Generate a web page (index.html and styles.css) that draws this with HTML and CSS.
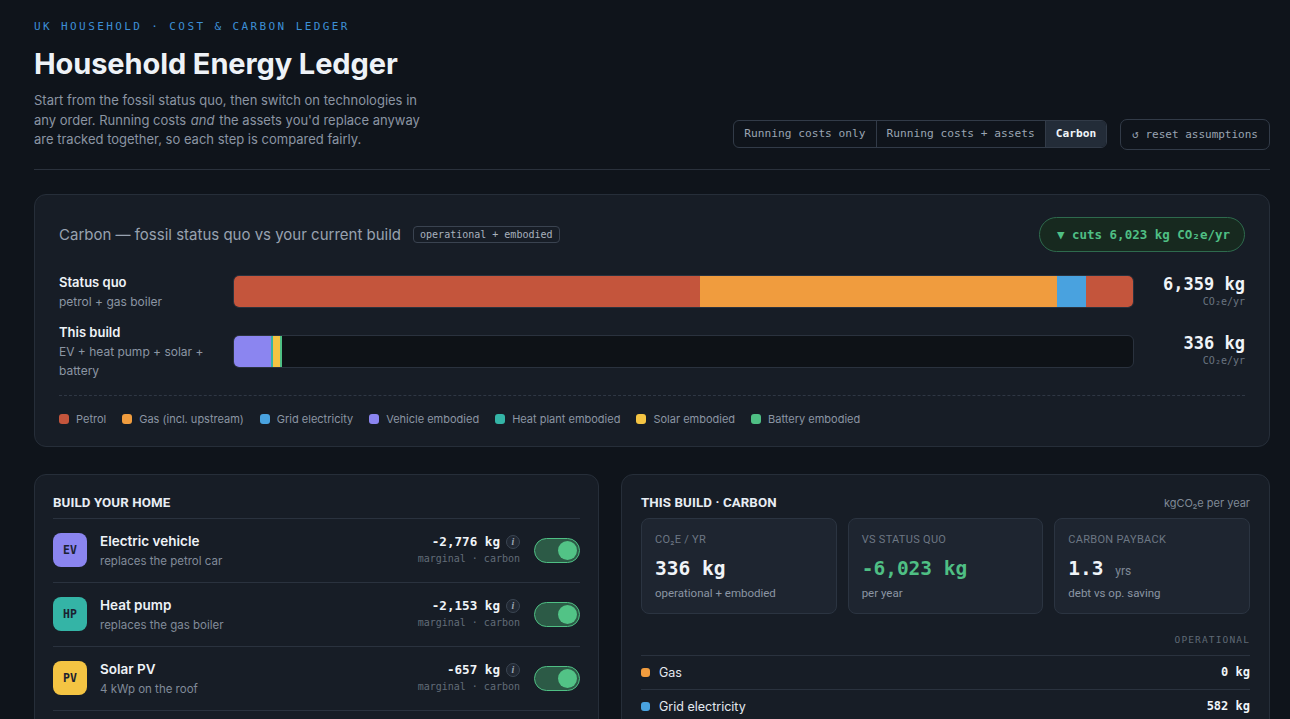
FILE: index.html
```html
<!DOCTYPE html>
<html lang="en">
<head>
<meta charset="utf-8">
<title>Household Energy Ledger</title>
<link rel="stylesheet" href="styles.css">
</head>
<body>
<div class="page">
  <header class="header">
    <div class="intro">
      <div class="eyebrow">UK HOUSEHOLD · COST &amp; CARBON LEDGER</div>
      <h1 class="title">Household Energy Ledger</h1>
      <p class="lede">Start from the fossil status quo, then switch on technologies in any order. Running costs <em>and</em> the assets you'd replace anyway are tracked together, so each step is compared fairly.</p>
    </div>
    <div class="controls">
      <div class="segmented">
        <button class="seg">Running costs only</button>
        <button class="seg">Running costs + assets</button>
        <button class="seg seg-active">Carbon</button>
      </div>
      <button class="reset">↺ reset assumptions</button>
    </div>
  </header>

  <section class="card compare">
    <div class="compare-head">
      <div class="compare-title">
        <span>Carbon — fossil status quo vs your current build</span>
        <span class="tag">operational + embodied</span>
      </div>
      <div class="cut-pill">▼ cuts 6,023 kg CO₂e/yr</div>
    </div>

    <div class="bar-row">
      <div class="bar-label">
        <div class="bar-name">Status quo</div>
        <div class="bar-sub">petrol + gas boiler</div>
      </div>
      <div class="bar-track">
        <div class="seg-fill c-petrol" style="width:51.8%"></div>
        <div class="seg-fill c-gas" style="width:39.75%"></div>
        <div class="seg-fill c-grid" style="width:3.2%"></div>
        <div class="seg-fill c-petrol" style="width:5.25%"></div>
      </div>
      <div class="bar-value">
        <div class="val">6,359 kg</div>
        <div class="unit">CO₂e/yr</div>
      </div>
    </div>

    <div class="bar-row">
      <div class="bar-label">
        <div class="bar-name">This build</div>
        <div class="bar-sub">EV + heat pump + solar + battery</div>
      </div>
      <div class="bar-track">
        <div class="seg-fill c-vehicle" style="width:4.1%"></div>
        <div class="seg-fill c-heat" style="width:0.25%"></div>
        <div class="seg-fill c-solar" style="width:0.75%"></div>
        <div class="seg-fill c-battery" style="width:0.25%"></div>
      </div>
      <div class="bar-value">
        <div class="val">336 kg</div>
        <div class="unit">CO₂e/yr</div>
      </div>
    </div>

    <div class="legend">
      <span class="lg"><i class="sw c-petrol"></i>Petrol</span>
      <span class="lg"><i class="sw c-gas"></i>Gas (incl. upstream)</span>
      <span class="lg"><i class="sw c-grid"></i>Grid electricity</span>
      <span class="lg"><i class="sw c-vehicle"></i>Vehicle embodied</span>
      <span class="lg"><i class="sw c-heat"></i>Heat plant embodied</span>
      <span class="lg"><i class="sw c-solar"></i>Solar embodied</span>
      <span class="lg"><i class="sw c-battery"></i>Battery embodied</span>
    </div>
  </section>

  <div class="lower">
    <section class="card build">
      <h2 class="section-title">BUILD YOUR HOME</h2>
      <div class="tech">
        <div class="badge c-vehicle">EV</div>
        <div class="tech-text">
          <div class="tech-name">Electric vehicle</div>
          <div class="tech-sub">replaces the petrol car</div>
        </div>
        <div class="tech-delta">
          <div class="delta-top"><span class="delta">-2,776 kg</span><span class="info">i</span></div>
          <div class="delta-sub">marginal · carbon</div>
        </div>
        <div class="toggle on"><span class="knob"></span></div>
      </div>
      <div class="tech">
        <div class="badge c-heat">HP</div>
        <div class="tech-text">
          <div class="tech-name">Heat pump</div>
          <div class="tech-sub">replaces the gas boiler</div>
        </div>
        <div class="tech-delta">
          <div class="delta-top"><span class="delta">-2,153 kg</span><span class="info">i</span></div>
          <div class="delta-sub">marginal · carbon</div>
        </div>
        <div class="toggle on"><span class="knob"></span></div>
      </div>
      <div class="tech">
        <div class="badge c-solar">PV</div>
        <div class="tech-text">
          <div class="tech-name">Solar PV</div>
          <div class="tech-sub">4 kWp on the roof</div>
        </div>
        <div class="tech-delta">
          <div class="delta-top"><span class="delta">-657 kg</span><span class="info">i</span></div>
          <div class="delta-sub">marginal · carbon</div>
        </div>
        <div class="toggle on"><span class="knob"></span></div>
      </div>
    </section>

    <section class="card summary">
      <div class="summary-head">
        <h2 class="section-title">THIS BUILD · CARBON</h2>
        <span class="per-year">kgCO₂e per year</span>
      </div>
      <div class="stats">
        <div class="stat">
          <div class="stat-label">CO₂E / YR</div>
          <div class="stat-value">336 kg</div>
          <div class="stat-sub">operational + embodied</div>
        </div>
        <div class="stat">
          <div class="stat-label">VS STATUS QUO</div>
          <div class="stat-value good">-6,023 kg</div>
          <div class="stat-sub">per year</div>
        </div>
        <div class="stat">
          <div class="stat-label">CARBON PAYBACK</div>
          <div class="stat-value">1.3 <span class="stat-unit">yrs</span></div>
          <div class="stat-sub">debt vs op. saving</div>
        </div>
      </div>
      <div class="group-label">OPERATIONAL</div>
      <div class="line-row">
        <span class="line-name"><i class="dot c-gas"></i>Gas</span>
        <span class="line-val">0 kg</span>
      </div>
      <div class="line-row">
        <span class="line-name"><i class="dot c-grid"></i>Grid electricity</span>
        <span class="line-val">582 kg</span>
      </div>
    </section>
  </div>
</div>
</body>
</html>
```

FILE: styles.css
```css
* { box-sizing: border-box; }

html, body {
  margin: 0;
  background: #0f141b;
  color: #e8edf4;
  font-family: "Inter", "Noto Sans", sans-serif;
}

.page {
  width: 1236px;
  margin-left: 34px;
}

/* header */
.header {
  display: flex;
  justify-content: space-between;
  align-items: flex-end;
  padding-top: 20px;
  padding-bottom: 19px;
  border-bottom: 1px solid #2a313c;
}

.eyebrow {
  font-family: "DejaVu Sans Mono", "Liberation Mono", monospace;
  font-size: 11px;
  letter-spacing: 2.4px;
  color: #3d8fd6;
  line-height: 14px;
}

.title {
  margin: 12px 0 0;
  font-family: "Inter", sans-serif;
  font-weight: 700;
  font-size: 29px;
  letter-spacing: -0.1px;
  line-height: 36px;
  color: #eef2f7;
}

.lede {
  margin: 9px 0 0;
  width: 392px;
  font-size: 13px;
  line-height: 19.5px;
  color: #8b95a3;
}
.lede em { font-style: italic; margin: 0 1px; }

.controls {
  display: flex;
  align-items: center;
  gap: 13px;
}

.segmented {
  display: flex;
  border: 1px solid #323b48;
  border-radius: 6px;
  overflow: hidden;
  margin-bottom: 1px;
}

.seg {
  background: transparent;
  border: none;
  border-left: 1px solid #323b48;
  color: #9aa4b2;
  font-family: "DejaVu Sans Mono", "Liberation Mono", monospace;
  font-size: 11.2px;
  height: 26px;
  padding: 0 10px;
}
.seg:first-child { border-left: none; }
.seg-active {
  background: #232c38;
  color: #f0f4f8;
  font-weight: 700;
}

.reset {
  background: transparent;
  border: 1px solid #323b48;
  border-radius: 7px;
  color: #9aa4b2;
  font-family: "DejaVu Sans Mono", "Liberation Mono", monospace;
  font-size: 11px;
  height: 31px;
  padding: 0 11px;
}

/* cards */
.card {
  background: #171d26;
  border: 1px solid #262e39;
  border-radius: 12px;
}

.compare {
  margin-top: 24px;
  padding: 22px 24px 19px;
}

.compare-head {
  display: flex;
  justify-content: space-between;
  align-items: center;
  margin-bottom: 21px;
}

.compare-title {
  display: flex;
  align-items: center;
  gap: 12px;
  font-size: 15px;
  color: #98a2b0;
}

.tag {
  font-family: "DejaVu Sans Mono", "Liberation Mono", monospace;
  font-size: 10px;
  color: #a9b2be;
  border: 1px solid #3a4350;
  border-radius: 4px;
  padding: 2px 6px;
}

.cut-pill {
  font-family: "DejaVu Sans Mono", "Liberation Mono", monospace;
  font-size: 12.5px;
  font-weight: 700;
  color: #4fbf84;
  background: #17291f;
  border: 1px solid #2e6a4d;
  border-radius: 18px;
  height: 35px;
  line-height: 33px;
  padding: 0 14px 0 17px;
}

.bar-row {
  display: grid;
  grid-template-columns: 160px 1fr 97px;
  column-gap: 14px;
  align-items: center;
  margin-bottom: 12px;
}

.bar-name {
  font-size: 13px;
  font-weight: 600;
  color: #eef2f7;
  line-height: 19px;
}
.bar-sub {
  font-size: 12px;
  color: #8b95a3;
  line-height: 19px;
}

.bar-track {
  display: flex;
  height: 33px;
  background: #0e1217;
  border: 1px solid #2a323e;
  border-radius: 6px;
  overflow: hidden;
}

.seg-fill { height: 100%; }

.bar-value { text-align: right; }
.val {
  font-family: "DejaVu Sans Mono", "Liberation Mono", monospace;
  font-weight: 700;
  font-size: 17px;
  color: #f0f4f8;
  line-height: 20px;
}
.unit {
  font-family: "DejaVu Sans Mono", "Liberation Mono", monospace;
  font-size: 10px;
  color: #6a7480;
  line-height: 16px;
}

.c-petrol { background: #c4553c; }
.c-gas { background: #f09c3e; }
.c-grid { background: #49a2df; }
.c-vehicle { background: #8b85f0; }
.c-heat { background: #34b4a6; }
.c-solar { background: #f4c443; }
.c-battery { background: #4fbf84; }

.legend {
  display: flex;
  gap: 16px;
  border-top: 1px dashed #2f3744;
  padding-top: 15px;
  margin-top: 15px;
}
.lg {
  display: flex;
  align-items: center;
  gap: 7px;
  font-size: 11px;
  color: #8b95a3;
  line-height: 16px;
}
.sw {
  width: 10px;
  height: 10px;
  border-radius: 3px;
  display: inline-block;
}

/* lower */
.lower {
  display: grid;
  grid-template-columns: 565px 1fr;
  column-gap: 22px;
  margin-top: 27px;
}

.section-title {
  margin: 0;
  font-family: "Roboto", "Inter", sans-serif;
  font-weight: 700;
  font-size: 13.3px;
  line-height: 16px;
  color: #e8edf4;
  letter-spacing: 0.1px;
}

.build {
  padding: 20px 18px 24px;
}
.build .section-title {
  padding-bottom: 7px;
  border-bottom: 1px solid #2a323e;
}

.tech {
  display: flex;
  align-items: center;
  height: 64px;
  border-bottom: 1px solid #2a323e;
}

.badge {
  width: 34px;
  height: 34px;
  border-radius: 8px;
  display: flex;
  align-items: center;
  justify-content: center;
  font-family: "DejaVu Sans Mono", "Liberation Mono", monospace;
  font-weight: 700;
  font-size: 11.5px;
  color: #1b2130;
  flex: none;
}

.tech-text {
  margin-left: 13px;
  flex: 1;
  padding-top: 2px;
}
.tech-name {
  font-size: 13.5px;
  font-weight: 600;
  color: #eef2f7;
  line-height: 19px;
}
.tech-sub {
  font-size: 11.5px;
  color: #818b99;
  line-height: 20px;
}

.tech-delta { text-align: right; }
.delta-top {
  display: flex;
  align-items: center;
  justify-content: flex-end;
  gap: 6px;
}
.delta {
  font-family: "DejaVu Sans Mono", "Liberation Mono", monospace;
  font-weight: 700;
  font-size: 12.6px;
  color: #f0f4f8;
  line-height: 18px;
}
.info {
  width: 14px;
  height: 14px;
  border-radius: 50%;
  border: 1px solid #3b4552;
  background: #212833;
  color: #9aa4b2;
  font-family: "Liberation Serif", serif;
  font-style: italic;
  font-weight: 700;
  font-size: 10px;
  line-height: 12px;
  text-align: center;
}
.delta-sub {
  font-family: "DejaVu Sans Mono", "Liberation Mono", monospace;
  font-size: 10px;
  color: #626c78;
  line-height: 16px;
}

.toggle {
  width: 46px;
  height: 25px;
  margin-left: 14px;
  border-radius: 13px;
  background: #2c5a46;
  border: 1px solid #4fbf84;
  position: relative;
  flex: none;
}
.knob {
  position: absolute;
  top: 2px;
  right: 2px;
  width: 19px;
  height: 19px;
  border-radius: 50%;
  background: #52c386;
}

.summary {
  padding: 20px 19px 24px;
}
.summary-head {
  display: flex;
  justify-content: space-between;
  align-items: baseline;
  margin-bottom: 7px;
}
.per-year {
  font-size: 11px;
  color: #7f8996;
}

.stats {
  display: grid;
  grid-template-columns: repeat(3, 1fr);
  gap: 11px;
}
.stat {
  background: #1e2530;
  border: 1px solid #2b3441;
  border-radius: 8px;
  height: 96px;
  padding: 14px 13px 0;
}
.stat-label {
  font-family: "Roboto", "Inter", sans-serif;
  font-size: 11px;
  color: #6d7784;
  letter-spacing: 0.3px;
  line-height: 14px;
}
.stat-value {
  margin-top: 10px;
  font-family: "DejaVu Sans Mono", "Liberation Mono", monospace;
  font-weight: 700;
  font-size: 19.5px;
  color: #f0f4f8;
  line-height: 24px;
  height: 24px;
}
.stat-value.good { color: #4fbf84; }
.stat-unit {
  font-family: "Roboto", "Inter", sans-serif;
  font-weight: 400;
  font-size: 12px;
  line-height: 12px;
  color: #7f8996;
}
.stat-sub {
  margin-top: 5px;
  font-family: "Roboto", "Inter", sans-serif;
  font-size: 11.5px;
  color: #8b95a3;
  line-height: 14px;
}

.group-label {
  margin-top: 19px;
  text-align: right;
  font-family: "DejaVu Sans Mono", "Liberation Mono", monospace;
  font-size: 9.5px;
  letter-spacing: 0.12em;
  color: #5f6975;
  line-height: 14px;
  padding-bottom: 8px;
  border-bottom: 1px solid #2a323e;
}

.line-row {
  display: flex;
  justify-content: space-between;
  align-items: center;
  height: 34px;
  border-bottom: 1px solid #2a323e;
}
.line-name {
  display: flex;
  align-items: center;
  gap: 9px;
  font-size: 12.5px;
  color: #e3e8ef;
}
.dot {
  width: 9px;
  height: 9px;
  border-radius: 3px;
  display: inline-block;
}
.line-val {
  font-family: "DejaVu Sans Mono", "Liberation Mono", monospace;
  font-weight: 700;
  font-size: 12px;
  color: #f0f4f8;
}
```
